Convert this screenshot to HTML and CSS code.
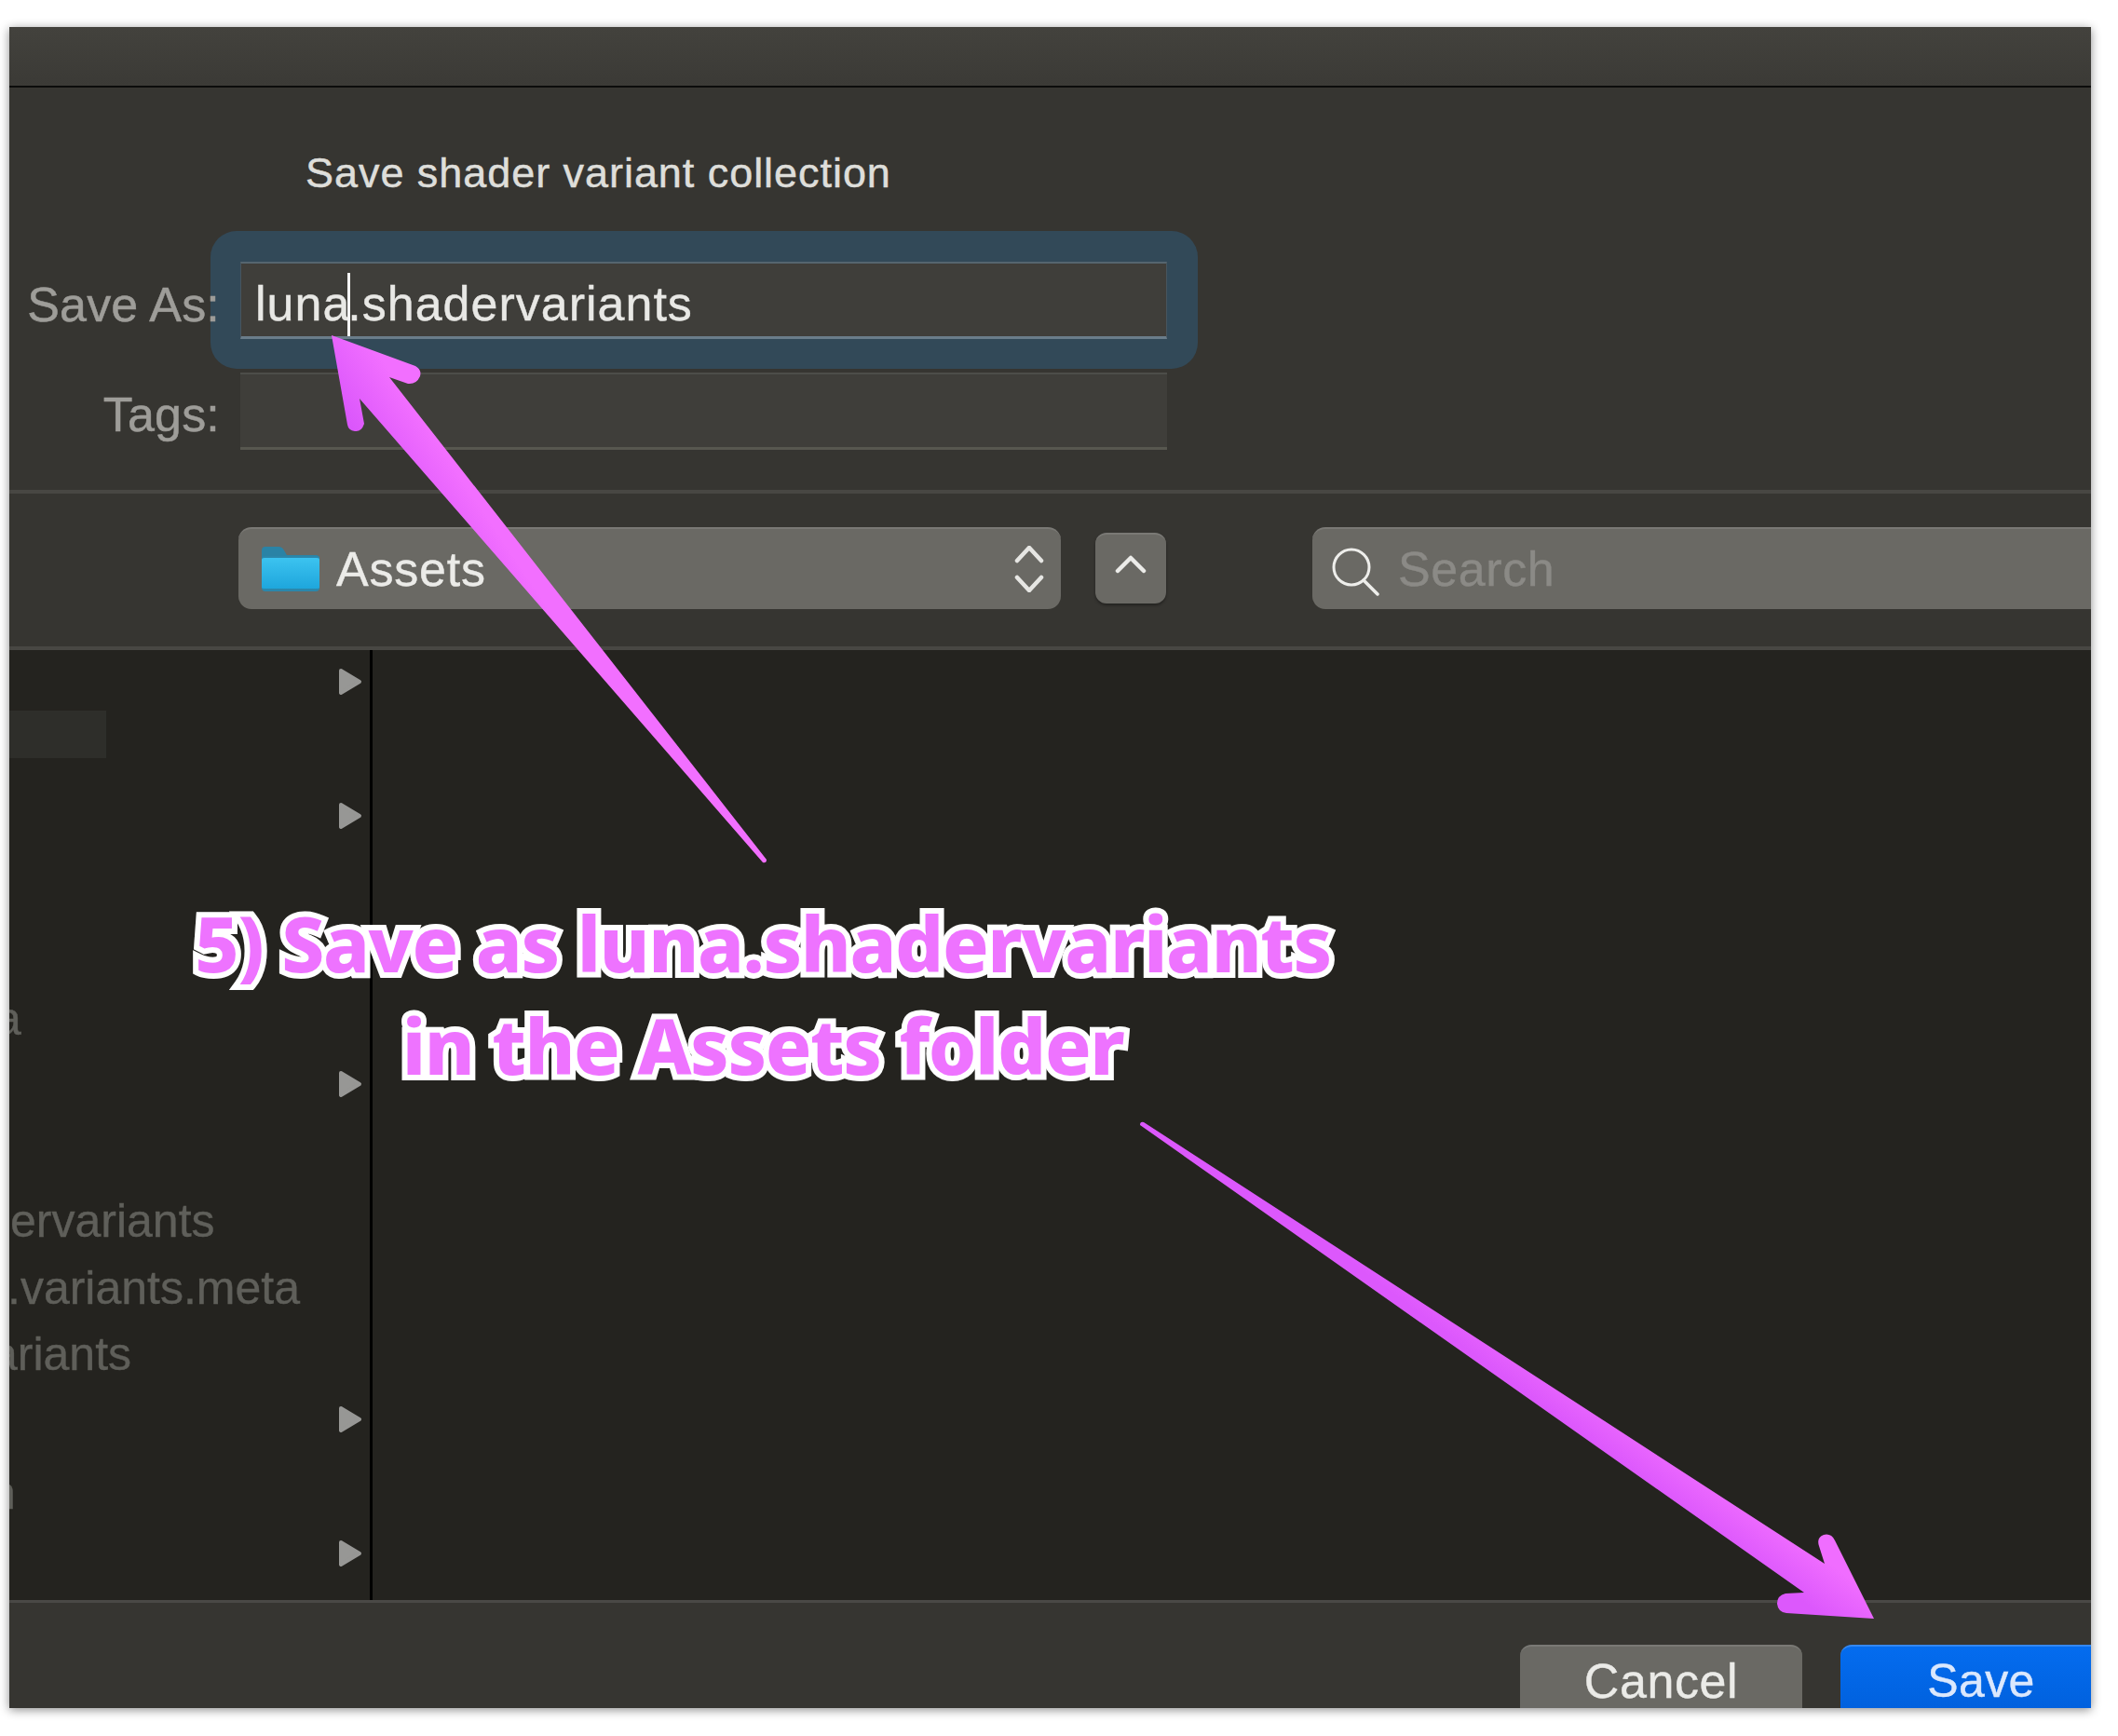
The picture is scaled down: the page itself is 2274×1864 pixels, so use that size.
FILE: index.html
```html
<!DOCTYPE html>
<html lang="en">
<head>
<meta charset="utf-8">
<title>Save shader variant collection</title>
<link rel="stylesheet" href="styles.css">
</head>
<body>
<main class="window">
  <div class="titlebar"></div>
  <section class="form">
    <h1 class="heading">Save shader variant collection</h1>
    <div class="row">
      <label class="label label-focus">Save As:</label>
      <div class="ring">
        <div class="field field-focus">luna<span class="caret"></span>.shadervariants</div>
      </div>
    </div>
    <div class="row row-tags">
      <label class="label">Tags:</label>
      <div class="field"></div>
    </div>
  </section>
  <section class="toolbar">
    <div class="popup">
      <svg class="folder" width="62" height="48" viewBox="0 0 62 48">
        <defs>
          <linearGradient id="fg" x1="0" y1="0" x2="0" y2="1">
            <stop offset="0" stop-color="#3cc3f0"/><stop offset="1" stop-color="#1ea6dc"/>
          </linearGradient>
        </defs>
        <path d="M0 4q0-4 4-4h14q4 0 6 4l3 5h31q4 0 4 4v10H0z" fill="#2a83a6"/>
        <path d="M0 12q0-2 3-2h56q3 0 3 2v32q0 4-4 4H4q-4 0-4-4z" fill="#2b87ab"/>
        <path d="M0 14q0-2 3-2h56q3 0 3 2v30q0 1-3 1H3q-3 0-3-1z" fill="url(#fg)"/>
      </svg>
      <span class="popup-text">Assets</span>
      <svg class="updown" width="34" height="50" viewBox="0 0 34 50">
        <path d="M4 16 17 2l13 14M4 34l13 14 13-14" fill="none" stroke="#e6e6e3" stroke-width="4.5" stroke-linecap="round" stroke-linejoin="round"/>
      </svg>
    </div>
    <button class="up-btn">
      <svg width="34" height="22" viewBox="0 0 34 22">
        <path d="M3 18 17 4l14 14" fill="none" stroke="#ecece9" stroke-width="4.5" stroke-linecap="round" stroke-linejoin="round"/>
      </svg>
    </button>
    <div class="search">
      <svg class="search-icon" width="52" height="52" viewBox="0 0 52 52">
        <circle cx="22" cy="21" r="19" fill="none" stroke="#eeeeeb" stroke-width="3"/>
        <path d="M35 35 50 50" stroke="#eeeeeb" stroke-width="3.5" stroke-linecap="round"/>
      </svg>
      <span class="search-text">Search</span>
    </div>
  </section>
  <section class="browser">
    <div class="sidebar">
      <div class="item"><svg class="disc" width="26" height="30" viewBox="0 0 26 30"><path d="M3 3 23 15 3 27z"/></svg></div>
      <div class="item"><span class="patch"></span></div>
      <div class="item"><svg class="disc" width="26" height="30" viewBox="0 0 26 30"><path d="M3 3 23 15 3 27z"/></svg></div>
      <div class="item"></div>
      <div class="item"></div>
      <div class="item"><span class="name name-a">a</span></div>
      <div class="item"><svg class="disc" width="26" height="30" viewBox="0 0 26 30"><path d="M3 3 23 15 3 27z"/></svg></div>
      <div class="item"></div>
      <div class="item"><span class="name name-er">ervariants</span></div>
      <div class="item"><span class="name name-var">.variants.meta</span></div>
      <div class="item"><span class="name name-ri">ariants</span></div>
      <div class="item"><svg class="disc" width="26" height="30" viewBox="0 0 26 30"><path d="M3 3 23 15 3 27z"/></svg></div>
      <div class="item"><span class="name name-n">n</span></div>
      <div class="item"><svg class="disc" width="26" height="30" viewBox="0 0 26 30"><path d="M3 3 23 15 3 27z"/></svg></div>
    </div>
    <div class="divider"></div>
    <div class="column"></div>
  </section>
  <footer class="bottom">
    <button class="btn btn-cancel">Cancel</button>
    <button class="btn btn-save">Save</button>
  </footer>

  <svg class="arrows" viewBox="10 29 2235 1805" width="2235" height="1805">
    <defs>
      <linearGradient id="a1" gradientUnits="userSpaceOnUse" x1="380" y1="470" x2="440" y2="430">
        <stop offset="0" stop-color="#d955fb"/><stop offset="1" stop-color="#f26fff"/>
      </linearGradient>
      <linearGradient id="a2" gradientUnits="userSpaceOnUse" x1="1930" y1="1715" x2="1960" y2="1675">
        <stop offset="0" stop-color="#dc58fc"/><stop offset="1" stop-color="#f06dff"/>
      </linearGradient>
    </defs>
    <path fill="url(#a1)" d="M356 360 446 393Q453 397 451 404Q447 413 438 412L418 405 823 923Q823 927 819 926L386 428 391 455Q388 464 381 463Q374 462 373 456Z"/>
    <path fill="url(#a2)" d="M2012 1738 1970 1654Q1966 1646 1958 1648Q1950 1651 1953 1660L1959 1679 1228 1205Q1224 1204 1224 1208L1937 1710 1917 1711Q1908 1713 1908 1722Q1909 1731 1918 1732Z"/>
  </svg>
  <div class="note">5) Save as luna.shadervariants<br>in the Assets folder</div>
</main>
</body>
</html>
```
FILE: styles.css
```css
* { box-sizing: border-box; }
html, body { margin: 0; background: #fff; }
body {
  width: 2274px;
  height: 1864px;
  padding: 29px 0 0 10px;
  font-family: "Liberation Sans", Arial, sans-serif;
  overflow: hidden;
}
.window {
  position: relative;
  width: 2235px;
  height: 1805px;
  background: #363531;
  display: flex;
  flex-direction: column;
  box-shadow: 0 2px 10px rgba(0, 0, 0, .45);
  overflow: hidden;
}
.titlebar {
  height: 65px;
  flex: none;
  background: linear-gradient(#43423d, #3b3a36);
  border-bottom: 2px solid #0c0c0b;
}
.form {
  height: 436px;
  flex: none;
  padding-top: 61px;
  border-bottom: 4px solid #484743;
}
.heading {
  margin: 0 0 33px 318px;
  font-size: 45px;
  line-height: 62px;
  height: 60px;
  font-weight: 400;
  color: #dededa;
  letter-spacing: .95px;
  -webkit-text-stroke: .5px #dededa;
}
.row { display: flex; align-items: center; }
.row-tags { margin-top: 4px; align-items: center; }
.label {
  position: relative;
  width: 226px;
  flex: none;
  padding-top: 9px;
  text-align: right;
  font-size: 52px;
  letter-spacing: .2px;
  color: #9e9d99;
  -webkit-text-stroke: .5px #9e9d99;
}
.label-focus { margin-right: -10px; }
.row-tags .label { margin-right: 22px; padding-top: 7px; }
.ring {
  width: 1060px;
  height: 148px;
  padding: 33px 33px 33px 32px;
  background: #324958;
  border-radius: 28px;
}
.field {
  width: 995px;
  height: 83px;
  background: #3f3e3a;
  border-top: 2px solid #4d4d49;
  border-bottom: 3px solid #57574f;
  padding-left: 15px;
  font-size: 52px;
  line-height: 87px;
  color: #e8e8e5;
  letter-spacing: 1px;
  -webkit-text-stroke: .4px #e8e8e5;
}
.field-focus { border-top-color: #55656f; border-bottom-color: #6a7d8a; border-left: 1px solid #47555e; border-right: 1px solid #47555e; }
.caret {
  display: inline-block;
  width: 3px;
  height: 68px;
  margin: 0 -3px 0 -3px;
  background: #f4f4f4;
  vertical-align: -17px;
}
.toolbar {
  height: 168px;
  flex: none;
  display: flex;
  align-items: flex-start;
  padding: 36px 0 0 246px;
  border-bottom: 4px solid #484743;
}
.popup, .up-btn, .search, .btn {
  background: #6a6964;
  border: 0;
  border-top: 2px solid #7a7975;
  font-family: inherit;
}
.popup {
  width: 883px;
  height: 88px;
  border-radius: 14px;
  display: flex;
  align-items: center;
  padding: 0 17px 0 25px;
}
.folder { flex: none; }
.popup-text {
  margin-left: 18px;
  font-size: 52px;
  letter-spacing: .8px;
  color: #ebebe8;
  -webkit-text-stroke: .4px #ebebe8;
}
.updown { margin-left: auto; flex: none; }
.up-btn {
  width: 76px;
  height: 76px;
  margin: 6px 0 0 37px;
  border-radius: 12px;
  padding: 0 0 10px;
  box-shadow: 0 2px 3px rgba(0, 0, 0, .35);
  display: flex;
  align-items: center;
  justify-content: center;
}
.search {
  flex: 1;
  height: 88px;
  margin-left: 157px;
  border-radius: 14px 0 0 14px;
  display: flex;
  align-items: center;
  padding-left: 21px;
}
.search-icon { flex: none; margin-top: 6px; margin-left: -1px; }
.search-text {
  margin-left: 20px;
  font-size: 52px;
  letter-spacing: .6px;
  color: #8b8a86;
  -webkit-text-stroke: .4px #8b8a86;
}
.browser {
  flex: none;
  height: 1020px;
  display: flex;
  background: #24231f;
}
.sidebar {
  width: 387px;
  flex: none;
  margin-top: -2px;
  overflow: hidden;
}
.item {
  height: 72px;
  display: flex;
  align-items: center;
}
.disc {
  margin-left: auto;
  margin-right: 8px;
  fill: #979795;
  stroke: #979795;
  stroke-width: 4;
  stroke-linejoin: round;
}
.patch {
  width: 104px;
  height: 51px;
  margin-bottom: 32px;
  background: #2e2e2a;
}
.name {
  flex: none;
  font-size: 50px;
  color: #5f5f5a;
  white-space: nowrap;
  -webkit-text-stroke: .4px #5f5f5a;
}
.name-a { margin-left: -15px; margin-top: 4px; }
.name-er { margin-left: 1px; margin-top: 6px; }
.name-var { margin-left: -2px; margin-top: 6px; }
.name-ri { margin-left: -19px; margin-top: 4px; }
.name-n { margin-left: -21px; margin-top: 14px; }
.divider { width: 3px; flex: none; background: #000; }
.column { flex: 1; }
.bottom {
  flex: 1;
  display: flex;
  justify-content: flex-end;
  gap: 41px;
  padding-top: 45px;
  border-top: 3px solid #4a4946;
  overflow: hidden;
}
.btn {
  height: 76px;
  border-radius: 12px 12px 0 0;
  font-size: 52px;
  line-height: 70px;
  padding: 0;
  flex: none;
  -webkit-text-stroke: .4px currentColor;
}
.btn-cancel { width: 303px; color: #ebebe8; letter-spacing: .6px; }
.btn-save {
  width: 269px;
  background: linear-gradient(#046cef, #0060dc);
  border-top-color: #3488f2;
  color: #dbe8fd;
  border-top-right-radius: 0;
  font-size: 50px;
  letter-spacing: .4px;
  padding-left: 33px;
}
.arrows {
  position: absolute;
  left: 0;
  top: 0;
  pointer-events: none;
}
.note {
  position: absolute;
  left: 109px;
  top: 928px;
  width: 1400px;
  text-align: center;
  font-family: "Noto Sans", "Open Sans", sans-serif;
  font-weight: 800;
  font-size: 82px;
  line-height: 110px;
  letter-spacing: -1.4px;
  color: #ee73ff;
  -webkit-text-stroke: 12px #fff;
  paint-order: stroke fill;
}
```
